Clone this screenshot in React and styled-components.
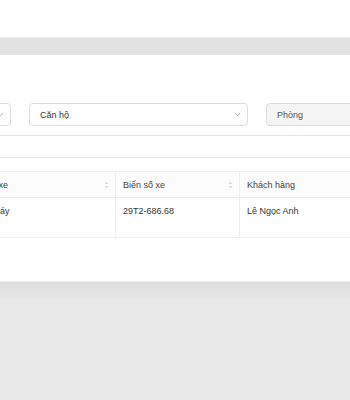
import React from "react"
import styled, { createGlobalStyle } from "styled-components"

const Global = createGlobalStyle`
  html, body {
    margin: 0;
    padding: 0;
    background: #e9e9e9;
    font-family: "Liberation Sans", Arial, sans-serif;
  }
`

const Page = styled.div`
  width: 350px;
  height: 400px;
  overflow: hidden;
  display: flex;
  flex-direction: column;
`

const TopArea = styled.div`
  height: 37px;
  background: #ffffff;
`

const Band = styled.div`
  height: 16px;
  background: #e2e2e2;
  border-top: 1px solid #ececec;
  border-bottom: 1px solid #e6e6e6;
`

const Panel = styled.section`
  height: 226px;
  background: #ffffff;
  overflow: hidden;
  padding-top: 48px;
  box-sizing: border-box;
`

const Bottom = styled.div`
  flex: 1;
  border-top: 1px solid #ededed;
  background: linear-gradient(#dddddd 0px, #e9e9e9 18px, #e9e9e9 100%);
`

const Shift = styled.div`
  margin-left: ${p => p.$shift}px;
  width: 900px;
`

const FilterRow = styled.div`
  display: flex;
  gap: 18px;
`

const Field = styled.div`
  width: 219px;
  height: 23px;
  box-sizing: border-box;
  border: 1px solid #dcdcdc;
  border-radius: 4px;
  background: ${p => (p.$disabled ? "#f5f5f5" : "#ffffff")};
  display: flex;
  align-items: center;
  padding: 0 6px 0 10px;
  font-size: 9px;
  color: ${p => (p.$disabled ? "#555555" : "#333333")};
`

const Value = styled.span`
  flex: 1;
`

const WideBox = styled.div`
  margin-top: 9px;
  height: 23px;
  box-sizing: border-box;
  border: 1px solid #e6e6e6;
  border-radius: 4px;
`

const Table = styled.div`
  margin-top: 13px;
  border-top: 1px solid #eeeeee;
  font-size: 9px;
  color: #333333;
`

const Row = styled.div`
  display: grid;
  grid-template-columns: 144px 124px 124px 124px;
  border-bottom: 1px solid #eeeeee;
  background: ${p => (p.$head ? "#fcfcfc" : "#ffffff")};
`

const Cell = styled.div`
  display: flex;
  align-items: ${p => (p.$head ? "center" : "flex-start")};
  height: ${p => (p.$head ? 25 : 39)}px;
  box-sizing: border-box;
  padding: ${p => (p.$head ? "0 6px 0 7px" : "8px 7px 0")};
  border-right: 1px solid #efefef;
  color: ${p => (p.$head ? "#444444" : "#333333")};
`

const Label = styled.span`
  flex: 1;
`

function Chevron() {
  return (
    <svg width="7" height="5" viewBox="0 0 7 5" fill="none">
      <path d="M1 1.2 L3.5 3.6 L6 1.2" stroke="#a8a8a8" strokeWidth="0.9" />
    </svg>
  )
}

function Sorter() {
  return (
    <svg width="5" height="8" viewBox="0 0 5 8">
      <path d="M2.5 0.5 L4.5 3 L0.5 3 Z" fill="#dadada" />
      <path d="M2.5 7.5 L4.5 5 L0.5 5 Z" fill="#dadada" />
    </svg>
  )
}

const columns = ["Loại xe", "Biển số xe", "Khách hàng", ""]
const rows = [["Xe máy", "29T2-686.68", "Lê Ngọc Anh", ""]]

export default function App() {
  return (
    <Page>
      <Global />
      <TopArea />
      <Band />
      <Panel>
        <Shift $shift={-208}>
          <FilterRow>
            <Field>
              <Value />
              <Chevron />
            </Field>
            <Field>
              <Value>Căn hộ</Value>
              <Chevron />
            </Field>
            <Field $disabled>
              <Value>Phòng</Value>
            </Field>
          </FilterRow>
          <WideBox />
        </Shift>
        <Shift $shift={-28}>
          <Table>
            <Row $head>
              {columns.map((c, i) => (
                <Cell $head key={i}>
                  <Label>{c}</Label>
                  {c && <Sorter />}
                </Cell>
              ))}
            </Row>
            {rows.map((r, i) => (
              <Row key={i}>
                {r.map((v, j) => (
                  <Cell key={j}>{v}</Cell>
                ))}
              </Row>
            ))}
          </Table>
        </Shift>
      </Panel>
      <Bottom />
    </Page>
  )
}
